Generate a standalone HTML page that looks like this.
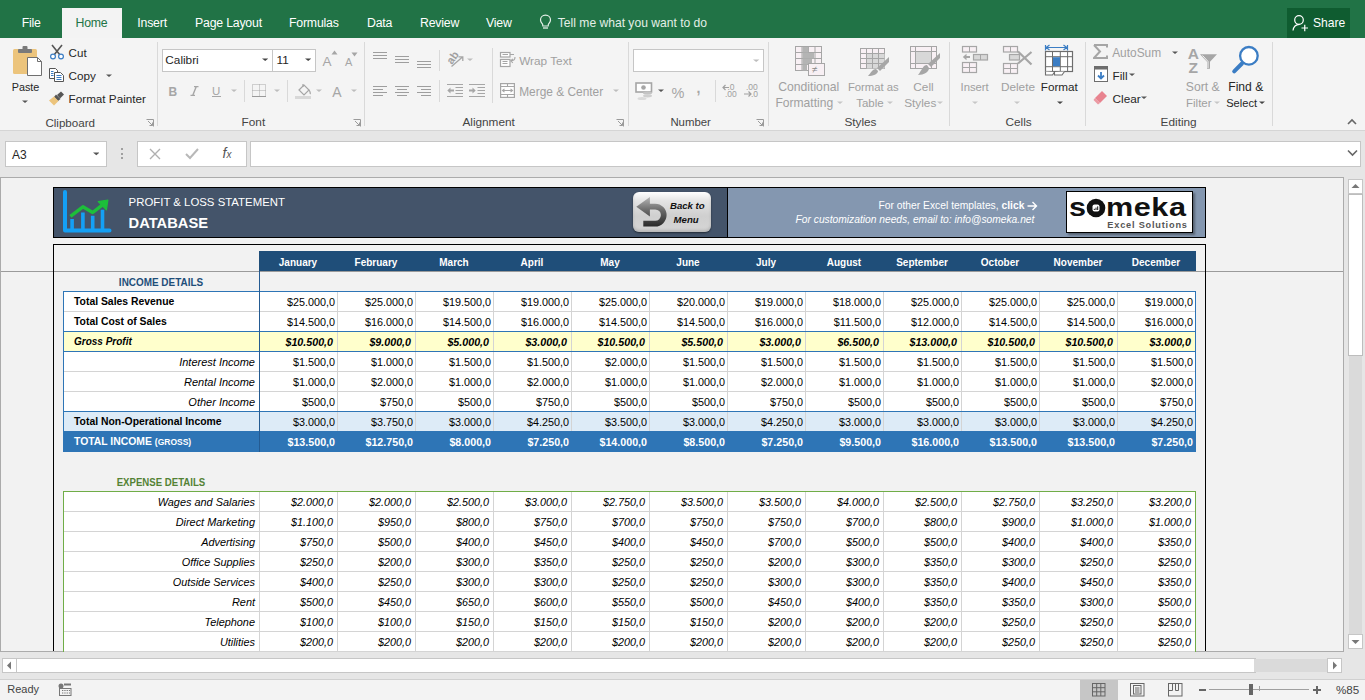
<!DOCTYPE html>
<html><head><meta charset="utf-8">
<style>
*{margin:0;padding:0;box-sizing:border-box}
html,body{width:1365px;height:700px;overflow:hidden;background:#f3f3f3;font-family:"Liberation Sans",sans-serif;position:relative}
.a{position:absolute}
.t{position:absolute;white-space:nowrap}
#sheet{left:0;top:177px;width:1344px;height:475px;background:#f2f2f2;overflow:hidden}
.c{position:absolute;height:20px;font-size:11px;line-height:20px;white-space:nowrap;color:#000}
</style></head><body>
<div class='a' style='left:0px;top:0px;width:1365px;height:38px;background:#217346'></div>
<div class='a' style='left:62px;top:8px;width:60px;height:30px;background:#f3f3f3'></div>
<div class='t' style='left:21.7px;top:16.99px;font-size:12.3px;line-height:12.3px;color:#ffffff;letter-spacing:-0.2px'>File</div>
<div class='t' style='left:75.5px;top:16.99px;font-size:12.3px;line-height:12.3px;color:#217346;letter-spacing:-0.2px'>Home</div>
<div class='t' style='left:137.3px;top:16.99px;font-size:12.3px;line-height:12.3px;color:#ffffff;letter-spacing:-0.2px'>Insert</div>
<div class='t' style='left:195px;top:16.99px;font-size:12.3px;line-height:12.3px;color:#ffffff;letter-spacing:-0.2px'>Page Layout</div>
<div class='t' style='left:289px;top:16.99px;font-size:12.3px;line-height:12.3px;color:#ffffff;letter-spacing:-0.2px'>Formulas</div>
<div class='t' style='left:367px;top:16.99px;font-size:12.3px;line-height:12.3px;color:#ffffff;letter-spacing:-0.2px'>Data</div>
<div class='t' style='left:420px;top:16.99px;font-size:12.3px;line-height:12.3px;color:#ffffff;letter-spacing:-0.2px'>Review</div>
<div class='t' style='left:486px;top:16.99px;font-size:12.3px;line-height:12.3px;color:#ffffff;letter-spacing:-0.2px'>View</div>
<svg class='a' style='left:539px;top:14px' width='13' height='16' viewBox='0 0 13 16'><path d='M6.5 1.2 C3.4 1.2 1.5 3.4 1.5 6 C1.5 8 2.8 9.2 3.6 10.3 L3.8 12 L9.2 12 L9.4 10.3 C10.2 9.2 11.5 8 11.5 6 C11.5 3.4 9.6 1.2 6.5 1.2Z' fill='none' stroke='#e6f0e9' stroke-width='1.2'/><path d='M4 14 L9 14' stroke='#e6f0e9' stroke-width='1.3'/></svg>
<div class='t' style='left:557.8px;top:16.56px;font-size:12.1px;line-height:12.1px;color:#e4efe7;'>Tell me what you want to do</div>
<div class='a' style='left:1287px;top:8px;width:63px;height:30px;background:#0f5c30'></div>
<svg class='a' style='left:1292px;top:14px' width='18' height='18' viewBox='0 0 18 18'><circle cx='7' cy='6' r='4.3' fill='none' stroke='#fff' stroke-width='1.2'/><path d='M1 16.5 C1.5 12.5 4 10.5 7.5 10.3' fill='none' stroke='#fff' stroke-width='1.2'/><path d='M9.5 14 L16 14 M12.75 10.8 L12.75 17.2' stroke='#fff' stroke-width='1.2'/></svg>
<div class='t' style='left:1313px;top:16.56px;font-size:12.1px;line-height:12.1px;color:#ffffff;'>Share</div>
<div class='a' style='left:0px;top:38px;width:1365px;height:92px;background:#f4f4f4'></div>
<div class='a' style='left:0px;top:130px;width:1365px;height:1px;background:#d5d5d5'></div>
<div class='a' style='left:157px;top:42px;width:1px;height:84px;background:#d9d9d9'></div>
<div class='a' style='left:364px;top:42px;width:1px;height:84px;background:#d9d9d9'></div>
<div class='a' style='left:628px;top:42px;width:1px;height:84px;background:#d9d9d9'></div>
<div class='a' style='left:768px;top:42px;width:1px;height:84px;background:#d9d9d9'></div>
<div class='a' style='left:949px;top:42px;width:1px;height:84px;background:#d9d9d9'></div>
<div class='a' style='left:1085px;top:42px;width:1px;height:84px;background:#d9d9d9'></div>
<div class='a' style='left:1272px;top:42px;width:1px;height:84px;background:#d9d9d9'></div>
<div class='t' style='left:45.4px;top:116.78px;font-size:11.6px;line-height:11.6px;color:#444444;'>Clipboard</div>
<div class='t' style='left:241.6px;top:116.61px;font-size:11.8px;line-height:11.8px;color:#444444;'>Font</div>
<div class='t' style='left:462.4px;top:116.61px;font-size:11.8px;line-height:11.8px;color:#444444;'>Alignment</div>
<div class='t' style='left:670.4px;top:116.95px;font-size:11.4px;line-height:11.4px;color:#444444;'>Number</div>
<div class='t' style='left:844.4px;top:116.61px;font-size:11.8px;line-height:11.8px;color:#444444;'>Styles</div>
<div class='t' style='left:1005.5px;top:116.61px;font-size:11.8px;line-height:11.8px;color:#444444;'>Cells</div>
<div class='t' style='left:1160.6px;top:116.61px;font-size:11.8px;line-height:11.8px;color:#444444;'>Editing</div>
<svg class='a' style='left:146px;top:118.5px' width='8' height='8' viewBox='0 0 8 8'><path d='M0.5 0.5 H7.5 V7.5' fill='none' stroke='#9a9a9a' stroke-width='1'/><path d='M2 2 L6.5 6.5 M6.5 3.5 V6.5 H3.5' fill='none' stroke='#9a9a9a' stroke-width='1'/></svg>
<svg class='a' style='left:353px;top:118.5px' width='8' height='8' viewBox='0 0 8 8'><path d='M0.5 0.5 H7.5 V7.5' fill='none' stroke='#9a9a9a' stroke-width='1'/><path d='M2 2 L6.5 6.5 M6.5 3.5 V6.5 H3.5' fill='none' stroke='#9a9a9a' stroke-width='1'/></svg>
<svg class='a' style='left:616px;top:118.5px' width='8' height='8' viewBox='0 0 8 8'><path d='M0.5 0.5 H7.5 V7.5' fill='none' stroke='#9a9a9a' stroke-width='1'/><path d='M2 2 L6.5 6.5 M6.5 3.5 V6.5 H3.5' fill='none' stroke='#9a9a9a' stroke-width='1'/></svg>
<svg class='a' style='left:756px;top:118.5px' width='8' height='8' viewBox='0 0 8 8'><path d='M0.5 0.5 H7.5 V7.5' fill='none' stroke='#9a9a9a' stroke-width='1'/><path d='M2 2 L6.5 6.5 M6.5 3.5 V6.5 H3.5' fill='none' stroke='#9a9a9a' stroke-width='1'/></svg>
<svg class='a' style='left:1347px;top:118px' width='10' height='7' viewBox='0 0 10 7'><path d='M1 6 L5 2 L9 6' fill='none' stroke='#666' stroke-width='1.6'/></svg>
<svg class='a' style='left:12px;top:45px' width='31' height='32' viewBox='0 0 31 32'><rect x='1' y='4' width='24' height='25' rx='1.5' fill='#ecc47c'/>
<rect x='6' y='4' width='14' height='4' rx='1' fill='#7a7a7a'/><rect x='10.5' y='1' width='5' height='4' rx='1' fill='#7a7a7a'/>
<path d='M15.5 12.5 H25.5 L29.5 16.5 V30.5 H15.5 Z' fill='#fff' stroke='#6f6f6f' stroke-width='1'/><path d='M25.5 12.5 V16.5 H29.5' fill='none' stroke='#6f6f6f' stroke-width='1'/></svg>
<div class='t' style='left:11.7px;top:82.46px;font-size:10.8px;line-height:10.8px;color:#262626;'>Paste</div>
<svg class='a' style='left:21.5px;top:99.5px' width='6' height='4' viewBox='0 0 6 4'><path d='M0 0.5 L6 0.5 L3 2.90Z' fill='#555'/></svg>
<svg class='a' style='left:49px;top:44px' width='16' height='16' viewBox='0 0 16 16'><path d='M3 1 L11 11 M13 1 L5 11' stroke='#555' stroke-width='1.6'/><circle cx='4' cy='12.5' r='2.4' fill='#fff' stroke='#3b7dc4' stroke-width='1.2'/><circle cx='12' cy='12.5' r='2.4' fill='#fff' stroke='#3b7dc4' stroke-width='1.2'/></svg>
<div class='t' style='left:68.6px;top:46.78px;font-size:11.6px;line-height:11.6px;color:#262626;'>Cut</div>
<svg class='a' style='left:48px;top:67px' width='17' height='16' viewBox='0 0 17 16'><path d='M1.5 1.5 H7.5 L9.5 3.5 V11.5 H1.5Z' fill='#fff' stroke='#555' stroke-width='1'/><path d='M6.5 5.5 H12.5 L15.5 8.5 V14.5 H6.5Z' fill='#fff' stroke='#555' stroke-width='1'/>
<path d='M3 4.5 H5.5 M3 6.5 H5.5 M3 8.5 H5.5' stroke='#3b7dc4' stroke-width='1'/><path d='M8.5 8.5 H13.5 M8.5 10.5 H13.5 M8.5 12.5 H13.5' stroke='#3b7dc4' stroke-width='1'/></svg>
<div class='t' style='left:68.6px;top:69.50px;font-size:11.7px;line-height:11.7px;color:#262626;'>Copy</div>
<svg class='a' style='left:105.5px;top:74px' width='6' height='4' viewBox='0 0 6 4'><path d='M0 0.5 L6 0.5 L3 2.90Z' fill='#555'/></svg>
<svg class='a' style='left:48px;top:90px' width='17' height='16' viewBox='0 0 17 16'><path d='M9 5 L13 1.5 L16 4.5 L12 8.5Z' fill='#555'/><path d='M8 4.5 L12.5 9 L10 11 L6 7Z' fill='#555'/><path d='M6 6.5 L10.5 11 L6 15.5 L1 10.5 Z' fill='#ecc47c'/></svg>
<div class='t' style='left:68.6px;top:92.60px;font-size:11.7px;line-height:11.7px;color:#262626;'>Format Painter</div>
<div class='a' style='left:162px;top:49px;width:111px;height:23px;background:#fff;border:1px solid #c6c6c6'></div>
<div class='a' style='left:272px;top:49px;width:44px;height:23px;background:#fff;border:1px solid #c6c6c6'></div>
<div class='t' style='left:165.3px;top:55.41px;font-size:11.8px;line-height:11.8px;color:#262626;'>Calibri</div>
<svg class='a' style='left:262.0px;top:58px' width='6.4' height='4' viewBox='0 0 6.4 4'><path d='M0 0.5 L6.4 0.5 L3.2 3.06Z' fill='#444'/></svg>
<div class='t' style='left:276.5px;top:55.41px;font-size:11.8px;line-height:11.8px;color:#262626;'>11</div>
<svg class='a' style='left:305.1px;top:58px' width='6.4' height='4' viewBox='0 0 6.4 4'><path d='M0 0.5 L6.4 0.5 L3.2 3.06Z' fill='#444'/></svg>
<div class='t' style='left:322.5px;top:55.07px;font-size:13.5px;line-height:13.5px;color:#a6a6a6;'>A</div>
<svg class='a' style='left:331px;top:50px' width='7' height='5' viewBox='0 0 7 5'><path d='M0.5 4.5 L3.5 0.5 L6.5 4.5Z' fill='#a6a6a6'/></svg>
<div class='t' style='left:345px;top:57.19px;font-size:11px;line-height:11px;color:#a6a6a6;'>A</div>
<svg class='a' style='left:351px;top:52px' width='7' height='5' viewBox='0 0 7 5'><path d='M0.5 0.5 L6.5 0.5 L3.5 4.5Z' fill='#a6a6a6'/></svg>
<div class='t' style='left:168.5px;top:85.84px;font-size:12px;line-height:12px;color:#a6a6a6;font-weight:bold'>B</div>
<svg class='a' style='left:190px;top:86px' width='9' height='10' viewBox='0 0 9 10'><path d='M4 0.5 H8.5 M0.5 9.5 H5 M6.3 0.5 L2.7 9.5' fill='none' stroke='#a6a6a6' stroke-width='1.4'/></svg>
<div class='t' style='left:212px;top:86.27px;font-size:11.5px;line-height:11.5px;color:#a6a6a6;'>U</div>
<div class='a' style='left:212px;top:96px;width:9px;height:1px;background:#a6a6a6'></div>
<svg class='a' style='left:230.5px;top:89px' width='6' height='4' viewBox='0 0 6 4'><path d='M0 0.5 L6 0.5 L3 2.90Z' fill='#bdbdbd'/></svg>
<div class='a' style='left:244px;top:80px;width:1px;height:22px;background:#d9d9d9'></div>
<svg class='a' style='left:252px;top:84px' width='14' height='13' viewBox='0 0 14 13'><path d='M0.5 0.5 H13.5 V12.5 H0.5Z M7.5 0.5 V12.5 M0.5 6.5 H13.5' fill='none' stroke='#a8a8a8' stroke-width='1' stroke-dasharray='1 1'/><path d='M0 12.5 H14' stroke='#9a9a9a' stroke-width='1'/></svg>
<svg class='a' style='left:273.5px;top:89px' width='6' height='4' viewBox='0 0 6 4'><path d='M0 0.5 L6 0.5 L3 2.90Z' fill='#bdbdbd'/></svg>
<div class='a' style='left:287px;top:80px;width:1px;height:22px;background:#d9d9d9'></div>
<svg class='a' style='left:295px;top:82px' width='17' height='17' viewBox='0 0 17 17'><path d='M4 8 L9 3 L14 8 L9 13Z' fill='none' stroke='#a6a6a6' stroke-width='1.2'/><path d='M8 2 L8 5' stroke='#a6a6a6' stroke-width='1.2'/><path d='M14 8 Q16 11 15 12' fill='none' stroke='#a6a6a6' stroke-width='1.2'/><rect x='0' y='14' width='16' height='3' fill='#d8d8d8'/></svg>
<svg class='a' style='left:316.3px;top:89px' width='6' height='4' viewBox='0 0 6 4'><path d='M0 0.5 L6 0.5 L3 2.90Z' fill='#bdbdbd'/></svg>
<div class='t' style='left:332.3px;top:84.65px;font-size:14px;line-height:14px;color:#a6a6a6;'>A</div>
<svg class='a' style='left:351px;top:89px' width='6' height='4' viewBox='0 0 6 4'><path d='M0 0.5 L6 0.5 L3 2.90Z' fill='#bdbdbd'/></svg>
<div class='a' style='left:373px;top:52px;width:14px;height:1px;background:#9e9e9e'></div>
<div class='a' style='left:373px;top:55px;width:14px;height:1px;background:#9e9e9e'></div>
<div class='a' style='left:373px;top:58px;width:14px;height:1px;background:#9e9e9e'></div>
<div class='a' style='left:395px;top:56px;width:14px;height:1px;background:#9e9e9e'></div>
<div class='a' style='left:395px;top:59px;width:14px;height:1px;background:#9e9e9e'></div>
<div class='a' style='left:395px;top:62px;width:14px;height:1px;background:#9e9e9e'></div>
<div class='a' style='left:417px;top:61px;width:14px;height:1px;background:#9e9e9e'></div>
<div class='a' style='left:417px;top:64px;width:14px;height:1px;background:#9e9e9e'></div>
<div class='a' style='left:417px;top:67px;width:14px;height:1px;background:#9e9e9e'></div>
<div class='a' style='left:439px;top:50px;width:1px;height:21px;background:#d9d9d9'></div>
<svg class='a' style='left:445px;top:50px' width='22' height='19' viewBox='0 0 22 19'><text x='0' y='0' font-size='11' font-family='Liberation Sans' fill='#a0a0a0' font-weight='bold' transform='translate(7 15) rotate(-55)'>ab</text><path d='M6.5 16.5 L17.5 7 M13.5 6.8 H17.8 V11' fill='none' stroke='#a6a6a6' stroke-width='1.3'/></svg>
<svg class='a' style='left:466.5px;top:58px' width='6' height='4' viewBox='0 0 6 4'><path d='M0 0.5 L6 0.5 L3 2.90Z' fill='#bdbdbd'/></svg>
<div class='a' style='left:373px;top:86px;width:14px;height:1px;background:#9e9e9e'></div>
<div class='a' style='left:373px;top:89px;width:10px;height:1px;background:#9e9e9e'></div>
<div class='a' style='left:373px;top:92px;width:14px;height:1px;background:#9e9e9e'></div>
<div class='a' style='left:373px;top:95px;width:10px;height:1px;background:#9e9e9e'></div>
<div class='a' style='left:395.0px;top:86px;width:14px;height:1px;background:#9e9e9e'></div>
<div class='a' style='left:397.0px;top:89px;width:10px;height:1px;background:#9e9e9e'></div>
<div class='a' style='left:395.0px;top:92px;width:14px;height:1px;background:#9e9e9e'></div>
<div class='a' style='left:397.0px;top:95px;width:10px;height:1px;background:#9e9e9e'></div>
<div class='a' style='left:417px;top:86px;width:14px;height:1px;background:#9e9e9e'></div>
<div class='a' style='left:421px;top:89px;width:10px;height:1px;background:#9e9e9e'></div>
<div class='a' style='left:417px;top:92px;width:14px;height:1px;background:#9e9e9e'></div>
<div class='a' style='left:421px;top:95px;width:10px;height:1px;background:#9e9e9e'></div>
<div class='a' style='left:439px;top:80px;width:1px;height:22px;background:#d9d9d9'></div>
<svg class='a' style='left:446px;top:83px' width='18' height='15' viewBox='0 0 18 15'><path d='M1 1.5 H17 M9.5 4.5 H17 M9.5 7.5 H17 M9.5 10.5 H17 M1 13.5 H17' stroke='#a6a6a6' stroke-width='1.2'/><path d='M1.3 7.5 L4.5 4.5 V10.5Z' fill='#a6a6a6'/><path d='M3 7.5 H8' stroke='#a6a6a6' stroke-width='2'/></svg>
<svg class='a' style='left:469px;top:83px' width='18' height='15' viewBox='0 0 18 15'><path d='M0 1.5 H16 M8.5 4.5 H16 M8.5 7.5 H16 M8.5 10.5 H16 M0 13.5 H16' stroke='#a6a6a6' stroke-width='1.2'/><path d='M6.7 7.5 L3.5 4.5 V10.5Z' fill='#a6a6a6'/><path d='M0 7.5 H5' stroke='#a6a6a6' stroke-width='2'/></svg>
<div class='a' style='left:492px;top:48px;width:1px;height:55px;background:#d9d9d9'></div>
<svg class='a' style='left:499px;top:51px' width='18' height='17' viewBox='0 0 18 17'><rect x='1.5' y='1.5' width='9.5' height='4.5' fill='#fff' stroke='#a6a6a6' stroke-width='1.2'/><path d='M3.5 3.5 H9 M11 3.5 H15' stroke='#a6a6a6' stroke-width='1'/><rect x='1.5' y='8.5' width='9.5' height='7' fill='#fff' stroke='#a6a6a6' stroke-width='1.2'/><path d='M3.5 10.5 H8.5 M3.5 12.5 H8.5' stroke='#a6a6a6' stroke-width='1'/><path d='M16 6 C16 8.5 15 9.8 12 9.8 M13.8 7.8 L11.8 9.8 L13.8 11.8' fill='none' stroke='#a6a6a6' stroke-width='1.1'/></svg>
<div class='t' style='left:519.2px;top:55.81px;font-size:11.8px;line-height:11.8px;color:#a0a0a0;'>Wrap Text</div>
<svg class='a' style='left:500px;top:83px' width='15' height='15' viewBox='0 0 15 15'><rect x='0.6' y='0.6' width='13.8' height='13.8' fill='#fff' stroke='#a6a6a6' stroke-width='1.2'/><path d='M0.5 3.5 H14.5 M0.5 11.5 H14.5 M7.5 0.5 V3.5 M7.5 11.5 V14.5' stroke='#a6a6a6' stroke-width='1.1'/><path d='M2.5 7.5 H12.5 M4.5 5.8 L2.5 7.5 L4.5 9.2 M10.5 5.8 L12.5 7.5 L10.5 9.2' fill='none' stroke='#a6a6a6' stroke-width='1.1'/></svg>
<div class='t' style='left:519.2px;top:86.63px;font-size:11.9px;line-height:11.9px;color:#a0a0a0;'>Merge &amp; Center</div>
<svg class='a' style='left:613px;top:89px' width='6' height='4' viewBox='0 0 6 4'><path d='M0 0.5 L6 0.5 L3 2.90Z' fill='#bdbdbd'/></svg>
<div class='a' style='left:633px;top:49px;width:131px;height:23px;background:#fff;border:1px solid #c6c6c6'></div>
<svg class='a' style='left:753.3px;top:58.5px' width='6.4' height='4' viewBox='0 0 6.4 4'><path d='M0 0.5 L6.4 0.5 L3.2 3.06Z' fill='#bdbdbd'/></svg>
<svg class='a' style='left:635px;top:82px' width='18' height='19' viewBox='0 0 18 19'><rect x='1' y='1' width='15.5' height='9' fill='#fff' stroke='#a6a6a6' stroke-width='1.6'/><circle cx='8.5' cy='5.5' r='2.3' fill='#a6a6a6'/><ellipse cx='12.5' cy='11' rx='4.5' ry='1.6' fill='#c4c4c4'/><ellipse cx='12.5' cy='13.8' rx='4.5' ry='1.6' fill='#cfcfcf'/><ellipse cx='7' cy='16.5' rx='4.5' ry='1.6' fill='#dadada'/></svg>
<svg class='a' style='left:657.5px;top:89px' width='6' height='4' viewBox='0 0 6 4'><path d='M0 0.5 L6 0.5 L3 2.90Z' fill='#555'/></svg>
<div class='t' style='left:671.5px;top:86.03px;font-size:14.5px;line-height:14.5px;color:#a6a6a6;'>%</div>
<div class='t' style='left:696.5px;top:81.45px;font-size:14px;line-height:14px;color:#a6a6a6;font-weight:bold'>,</div>
<div class='a' style='left:715px;top:80px;width:1px;height:22px;background:#d9d9d9'></div>
<svg class='a' style='left:722px;top:83px' width='17' height='16' viewBox='0 0 17 16'><text x='5.5' y='6.5' font-size='8.5' font-family='Liberation Sans' fill='#a0a0a0'>.0</text><text x='3' y='13.5' font-size='8.5' font-family='Liberation Sans' fill='#a0a0a0'>.00</text><path d='M1 4.5 H7 M3.5 2 L1 4.5 L3.5 7' fill='none' stroke='#a0a0a0' stroke-width='1.2'/></svg>
<svg class='a' style='left:743px;top:83px' width='17' height='16' viewBox='0 0 17 16'><text x='3' y='6.5' font-size='8.5' font-family='Liberation Sans' fill='#a0a0a0'>.00</text><text x='8' y='13.5' font-size='8.5' font-family='Liberation Sans' fill='#a0a0a0'>.0</text><path d='M1 11 H8 M5.5 8.5 L8 11 L5.5 13.5' fill='none' stroke='#a0a0a0' stroke-width='1.2'/></svg>
<svg class='a' style='left:794px;top:45px' width='32' height='32' viewBox='0 0 32 32'><g stroke='#a6a6a6' fill='#f8f0f4'><rect x='1.5' y='1.5' width='26' height='24'/></g>
<path d='M8 1.5 V25.5 M14.5 1.5 V25.5 M21 1.5 V25.5 M1.5 7.5 H27.5 M1.5 13.5 H27.5 M1.5 19.5 H27.5' stroke='#a6a6a6'/>
<rect x='8.5' y='2' width='6' height='5.5' fill='#b4b4b4'/><rect x='8.5' y='8' width='11.5' height='5.5' fill='#b4b4b4'/><rect x='8.5' y='14' width='9.5' height='5.5' fill='#b4b4b4'/><rect x='8.5' y='20' width='4.5' height='5.5' fill='#b4b4b4'/>
<rect x='14.5' y='18.5' width='16' height='12' fill='#f8f0f4' stroke='#a6a6a6'/><text x='18' y='28' font-size='10' fill='#888' font-family='Liberation Sans'>≠</text></svg>
<div class='t' style='left:778.2px;top:81.37px;font-size:12.2px;line-height:12.2px;color:#a0a0a0;'>Conditional</div>
<div class='t' style='left:775.4px;top:97.46px;font-size:12.1px;line-height:12.1px;color:#a0a0a0;'>Formatting</div>
<svg class='a' style='left:836.5px;top:100.5px' width='6' height='4' viewBox='0 0 6 4'><path d='M0 0.5 L6 0.5 L3 2.90Z' fill='#c6c6c6'/></svg>
<svg class='a' style='left:859px;top:47px' width='32' height='30' viewBox='0 0 32 30'><rect x='1.5' y='1.5' width='24' height='20' fill='#f8f0f4' stroke='#a6a6a6'/>
<rect x='7.5' y='6.5' width='18' height='15' fill='#d8d8d8'/>
<path d='M7.5 1.5 V21.5 M13.5 1.5 V21.5 M19.5 1.5 V21.5 M1.5 6.5 H25.5 M1.5 11.5 H25.5 M1.5 16.5 H25.5' stroke='#a6a6a6'/>
<path d='M30 10 L30 15 L21 24 L18 21 Z' fill='#a6a6a6'/><path d='M17 22 C13 22 12 26 9 29 C14 29 19 27 19 24Z' fill='#a6a6a6'/></svg>
<div class='t' style='left:847.9px;top:82.13px;font-size:11.3px;line-height:11.3px;color:#a0a0a0;'>Format as</div>
<div class='t' style='left:856.2px;top:97.97px;font-size:11.5px;line-height:11.5px;color:#a0a0a0;'>Table</div>
<svg class='a' style='left:886.6px;top:100.5px' width='6' height='4' viewBox='0 0 6 4'><path d='M0 0.5 L6 0.5 L3 2.90Z' fill='#c6c6c6'/></svg>
<svg class='a' style='left:909px;top:45px' width='32' height='32' viewBox='0 0 32 32'><rect x='1.5' y='1.5' width='26' height='22' fill='#f8f0f4' stroke='#a6a6a6'/>
<rect x='6.5' y='6.5' width='16' height='12' fill='#d8d8d8' stroke='#a6a6a6'/><path d='M1.5 6.5 H27.5 M1.5 18.5 H27.5 M6.5 1.5 V23.5 M22.5 1.5 V23.5' stroke='#a6a6a6'/>
<path d='M31 8 L31 13 L22 22 L19 19 Z' fill='#a6a6a6'/><path d='M18 20 C14 20 13 25 9 30 C15 30 20 27 20 23Z' fill='#a6a6a6'/></svg>
<div class='t' style='left:913.3px;top:81.71px;font-size:11.8px;line-height:11.8px;color:#a0a0a0;'>Cell</div>
<div class='t' style='left:904.2px;top:97.71px;font-size:11.8px;line-height:11.8px;color:#a0a0a0;'>Styles</div>
<svg class='a' style='left:936.5px;top:100.5px' width='6' height='4' viewBox='0 0 6 4'><path d='M0 0.5 L6 0.5 L3 2.90Z' fill='#c6c6c6'/></svg>
<svg class='a' style='left:961px;top:45px' width='28' height='29' viewBox='0 0 28 29'><rect x='1.5' y='1.5' width='14' height='5.5' fill='#f8f0f4' stroke='#a6a6a6' stroke-width='1.2'/><path d='M8.5 1.5 V7' stroke='#a6a6a6'/>
<rect x='12.5' y='9.5' width='14' height='5.5' fill='#d8d8d8' stroke='#a6a6a6' stroke-width='1.2'/><path d='M19.5 9.5 V15' stroke='#a6a6a6'/>
<path d='M3 12 H9' stroke='#a6a6a6' stroke-width='2'/><path d='M1.8 12 L5.5 8.8 V15.2Z' fill='#a6a6a6'/>
<rect x='1.5' y='17.5' width='14' height='10' fill='#f8f0f4' stroke='#a6a6a6' stroke-width='1.2'/><path d='M8.5 17.5 V27.5 M1.5 22.5 H15.5' stroke='#a6a6a6'/></svg>
<div class='t' style='left:960.5px;top:81.83px;font-size:11.3px;line-height:11.3px;color:#a0a0a0;'>Insert</div>
<svg class='a' style='left:971.5px;top:100.5px' width='6' height='4' viewBox='0 0 6 4'><path d='M0 0.5 L6 0.5 L3 2.90Z' fill='#c6c6c6'/></svg>
<svg class='a' style='left:1002px;top:45px' width='31' height='30' viewBox='0 0 31 30'><rect x='1.5' y='1.5' width='14' height='5.5' fill='#f8f0f4' stroke='#a6a6a6' stroke-width='1.2'/><path d='M8.5 1.5 V7' stroke='#a6a6a6'/>
<rect x='7.5' y='9.5' width='10' height='5.5' fill='#d8d8d8' stroke='#a6a6a6' stroke-width='1.2'/>
<rect x='1.5' y='18.5' width='14' height='10' fill='#f8f0f4' stroke='#a6a6a6' stroke-width='1.2'/><path d='M8.5 18.5 V28.5 M1.5 23.5 H15.5' stroke='#a6a6a6'/>
<path d='M16 6.5 L29.5 19.5 M29.5 7 L16 18.5' stroke='#a6a6a6' stroke-width='2.2'/></svg>
<div class='t' style='left:1000.9px;top:82.41px;font-size:11.8px;line-height:11.8px;color:#a0a0a0;'>Delete</div>
<svg class='a' style='left:1013.5px;top:100.5px' width='6' height='4' viewBox='0 0 6 4'><path d='M0 0.5 L6 0.5 L3 2.90Z' fill='#c6c6c6'/></svg>
<svg class='a' style='left:1044px;top:44px' width='30' height='33' viewBox='0 0 30 33'><path d='M1.5 1 V6.5 M23.5 1 V6.5 M2 3.5 H23 M5.5 1 L2.2 3.5 L5.5 6 M19.5 1 L22.8 3.5 L19.5 6' fill='none' stroke='#3b7dc4' stroke-width='1.2'/>
<rect x='1.5' y='7.5' width='27' height='20' fill='#fff' stroke='#6d6d6d' stroke-width='1.2'/>
<path d='M8.5 7.5 V27.5 M16.3 7.5 V27.5 M23.6 7.5 V27.5 M1.5 12.7 H28.5 M1.5 22.7 H28.5' stroke='#6d6d6d'/>
<rect x='9' y='13.2' width='7' height='9' fill='#3b7dc4'/>
<path d='M1.5 27.5 V31 H8.5 L10.5 28 M10.5 28 V31 H18 L20.5 27.5' fill='#fff' stroke='#6d6d6d' stroke-width='1.1'/></svg>
<div class='t' style='left:1040.8px;top:80.50px;font-size:11.7px;line-height:11.7px;color:#262626;'>Format</div>
<svg class='a' style='left:1056.5px;top:100.5px' width='6' height='4' viewBox='0 0 6 4'><path d='M0 0.5 L6 0.5 L3 2.90Z' fill='#444'/></svg>
<svg class='a' style='left:1093px;top:44px' width='16' height='15' viewBox='0 0 16 15'><path d='M1 1 H14 V3.5 M1 1 L7 7.5 L1 14 H14 V11.5' fill='none' stroke='#a6a6a6' stroke-width='2'/></svg>
<div class='t' style='left:1112.2px;top:47.73px;font-size:11.9px;line-height:11.9px;color:#a0a0a0;'>AutoSum</div>
<svg class='a' style='left:1171.5px;top:50.5px' width='6' height='4' viewBox='0 0 6 4'><path d='M0 0.5 L6 0.5 L3 2.90Z' fill='#555'/></svg>
<svg class='a' style='left:1094px;top:66px' width='15' height='17' viewBox='0 0 15 17'><rect x='0.5' y='0.5' width='13' height='15' fill='#fff' stroke='#6d6d6d'/><rect x='0.5' y='0.5' width='13' height='3' fill='#6d6d6d'/><path d='M7 6 V12 M4 9.5 L7 12.5 L10 9.5' fill='none' stroke='#3b7dc4' stroke-width='1.8'/></svg>
<div class='t' style='left:1112.5px;top:70.61px;font-size:11.8px;line-height:11.8px;color:#262626;'>Fill</div>
<svg class='a' style='left:1129px;top:73px' width='6' height='4' viewBox='0 0 6 4'><path d='M0 0.5 L6 0.5 L3 2.90Z' fill='#555'/></svg>
<svg class='a' style='left:1093px;top:90px' width='15' height='15' viewBox='0 0 15 15'><path d='M9 1 L14 6 L7 13 L2 8Z' fill='#e8838f'/><path d='M2 8 L7 13 L5 14.5 L0.5 10Z' fill='#e8838f' opacity='0.8'/></svg>
<div class='t' style='left:1112.5px;top:93.61px;font-size:11.8px;line-height:11.8px;color:#262626;'>Clear</div>
<svg class='a' style='left:1141px;top:96px' width='6' height='4' viewBox='0 0 6 4'><path d='M0 0.5 L6 0.5 L3 2.90Z' fill='#555'/></svg>
<svg class='a' style='left:1187px;top:45px' width='32' height='30' viewBox='0 0 32 30'><text x='0.8' y='13.5' font-size='15.5' font-weight='bold' fill='#a6a6a6' font-family='Liberation Sans'>A</text><text x='1.5' y='27.6' font-size='15.5' font-weight='bold' fill='#a6a6a6' font-family='Liberation Sans'>Z</text>
<path d='M13 9.2 H30 L23 16.8 V23.7 H20 V16.8Z' fill='#a6a6a6'/><path d='M15.5 10.5 L21 16.5 V23' fill='none' stroke='#fff' stroke-width='0.9'/></svg>
<div class='t' style='left:1185.8px;top:81.17px;font-size:12.2px;line-height:12.2px;color:#a0a0a0;'>Sort &amp;</div>
<div class='t' style='left:1186px;top:97.97px;font-size:11.5px;line-height:11.5px;color:#a0a0a0;'>Filter</div>
<svg class='a' style='left:1214px;top:100.5px' width='6' height='4' viewBox='0 0 6 4'><path d='M0 0.5 L6 0.5 L3 2.90Z' fill='#c6c6c6'/></svg>
<svg class='a' style='left:1231px;top:45px' width='30' height='30' viewBox='0 0 30 30'><circle cx='17.9' cy='10.8' r='8.8' fill='#fff' stroke='#3b7dc4' stroke-width='2.3'/><path d='M11 18.5 L3.2 26.3' stroke='#3b7dc4' stroke-width='4' stroke-linecap='round'/></svg>
<div class='t' style='left:1228.3px;top:81.26px;font-size:12.1px;line-height:12.1px;color:#262626;'>Find &amp;</div>
<div class='t' style='left:1226.2px;top:98.30px;font-size:11.1px;line-height:11.1px;color:#262626;'>Select</div>
<svg class='a' style='left:1259.4px;top:100.5px' width='6' height='4' viewBox='0 0 6 4'><path d='M0 0.5 L6 0.5 L3 2.90Z' fill='#444'/></svg>
<div class='a' style='left:0px;top:131px;width:1365px;height:46px;background:#e6e6e6'></div>
<div class='a' style='left:5px;top:141px;width:102px;height:26px;background:#fff;border:1px solid #c6c6c6'></div>
<div class='t' style='left:12px;top:149.14px;font-size:12px;line-height:12px;color:#262626;'>A3</div>
<svg class='a' style='left:92.7px;top:151.5px' width='6.6' height='4' viewBox='0 0 6.6 4'><path d='M0 0.5 L6.6 0.5 L3.3 3.14Z' fill='#555'/></svg>
<div class='a' style='left:121px;top:148px;width:2px;height:2px;background:#a0a0a0'></div>
<div class='a' style='left:121px;top:152.5px;width:2px;height:2px;background:#a0a0a0'></div>
<div class='a' style='left:121px;top:157px;width:2px;height:2px;background:#a0a0a0'></div>
<div class='a' style='left:137px;top:141px;width:110px;height:26px;background:#fff;border:1px solid #c6c6c6'></div>
<svg class='a' style='left:148px;top:147px' width='14' height='14' viewBox='0 0 14 14'><path d='M2 2 L12 12 M12 2 L2 12' stroke='#b0b0b0' stroke-width='1.4'/></svg>
<svg class='a' style='left:184px;top:147px' width='16' height='14' viewBox='0 0 16 14'><path d='M2 7 L6 11 L14 2' fill='none' stroke='#b8b8b8' stroke-width='2'/></svg>
<div class='t' style='left:222.5px;top:146.45px;font-size:14px;line-height:14px;color:#555;font-family:'Liberation Serif',serif;font-weight:bold'><i>f</i><span style='font-size:10px'><i>x</i></span></div>
<div class='a' style='left:250px;top:141px;width:1111px;height:26px;background:#fff;border:1px solid #c6c6c6'></div>
<svg class='a' style='left:1347px;top:149px' width='11' height='8' viewBox='0 0 11 8'><path d='M1 1.5 L5.5 6 L10 1.5' fill='none' stroke='#666' stroke-width='1.6'/></svg>
<div class='a' style='left:1344px;top:177px;width:21px;height:475px;background:#e6e6e6'></div>
<div class='a' style='left:1348px;top:179px;width:15px;height:15px;background:#fff;border:1px solid #c6c6c6'></div>
<svg class='a' style='left:1351px;top:183px' width='9' height='6' viewBox='0 0 9 6'><path d='M0.5 5 L4.5 1 L8.5 5Z' fill='#777'/></svg>
<div class='a' style='left:1349px;top:194px;width:13px;height:440px;background:#dadada'></div>
<div class='a' style='left:1348px;top:194px;width:15px;height:162px;background:#fff;border:1px solid #bdbdbd'></div>
<div class='a' style='left:1348px;top:634px;width:15px;height:15px;background:#fff;border:1px solid #c6c6c6'></div>
<svg class='a' style='left:1351px;top:639px' width='9' height='6' viewBox='0 0 9 6'><path d='M0.5 1 L4.5 5 L8.5 1Z' fill='#777'/></svg>
<div class='a' style='left:0px;top:652px;width:1365px;height:28px;background:#e6e6e6'></div>
<div class='a' style='left:2px;top:658px;width:1254px;height:15px;background:#fff;border:1px solid #c6c6c6'></div>
<div class='a' style='left:1254px;top:659px;width:73px;height:13px;background:#dadada'></div>
<div class='a' style='left:2px;top:658px;width:15px;height:15px;background:#fff;border:1px solid #c6c6c6'></div>
<svg class='a' style='left:6px;top:661px' width='6' height='9' viewBox='0 0 6 9'><path d='M5 0.5 L1 4.5 L5 8.5Z' fill='#777'/></svg>
<div class='a' style='left:1327px;top:658px;width:15px;height:15px;background:#fff;border:1px solid #c6c6c6'></div>
<svg class='a' style='left:1332px;top:661px' width='6' height='9' viewBox='0 0 6 9'><path d='M1 0.5 L5 4.5 L1 8.5Z' fill='#777'/></svg>
<div class='a' style='left:0px;top:679px;width:1365px;height:1px;background:#d0d0d0'></div>
<div class='a' style='left:0px;top:680px;width:1365px;height:20px;background:#f3f3f3'></div>
<div class='t' style='left:7.3px;top:684.49px;font-size:11px;line-height:11px;color:#444;'>Ready</div>
<svg class='a' style='left:58px;top:683px' width='14' height='13' viewBox='0 0 14 13'><circle cx='3' cy='3' r='2.5' fill='#777'/><path d='M6 1.5 H13' stroke='#777' stroke-width='2'/><rect x='1.5' y='5.5' width='11.5' height='7' fill='none' stroke='#777'/><path d='M4 7.5 H12 M4 10 H12' stroke='#777' stroke-dasharray='1.3 1'/></svg>
<div class='a' style='left:1080px;top:680px;width:38px;height:20px;background:#c6c6c6'></div>
<svg class='a' style='left:1092px;top:683px' width='14' height='14' viewBox='0 0 14 14'><rect x='0.5' y='0.5' width='12.5' height='12.5' fill='none' stroke='#666' stroke-width='1'/><path d='M4.7 0.5 V13 M8.8 0.5 V13 M0.5 4.7 H13 M0.5 8.8 H13' stroke='#666' stroke-width='1'/></svg>
<svg class='a' style='left:1130px;top:683px' width='15' height='14' viewBox='0 0 15 14'><rect x='0.5' y='0.5' width='13.5' height='12.5' fill='none' stroke='#666'/><rect x='3.5' y='2.5' width='7.5' height='8.5' fill='none' stroke='#666'/><path d='M5 5 H9.5 M5 7 H9.5 M5 9 H9.5' stroke='#666'/></svg>
<svg class='a' style='left:1168px;top:683px' width='15' height='14' viewBox='0 0 15 14'><rect x='0.5' y='0.5' width='13.5' height='12.5' fill='none' stroke='#666'/><path d='M4.5 0.5 V7.5 M7.5 0.5 V7.5 H10.5 V0.5 M0.5 7.5 H4.5' fill='none' stroke='#666'/></svg>
<div class='a' style='left:1199px;top:689px;width:7px;height:2px;background:#666'></div>
<div class='a' style='left:1209px;top:689px;width:100px;height:1px;background:#a0a0a0'></div>
<div class='a' style='left:1249px;top:684px;width:4px;height:11px;background:#666'></div>
<div class='a' style='left:1259px;top:686px;width:1px;height:5px;background:#a0a0a0'></div>
<div class='a' style='left:1313px;top:689px;width:8px;height:2px;background:#666'></div>
<div class='a' style='left:1316px;top:686px;width:2px;height:8px;background:#666'></div>
<div class='t' style='left:1336px;top:684.48px;font-size:11.6px;line-height:11.6px;color:#444;'>%85</div>
<div id="sheet" class="a">
<div class='a' style='left:0px;top:94px;width:1343px;height:1px;background:#9b9b9b'></div>
<div class='a' style='left:53px;top:67px;width:1153px;height:1px;background:#000'></div>
<div class='a' style='left:53px;top:67px;width:1px;height:420px;background:#000'></div>
<div class='a' style='left:1205px;top:67px;width:1px;height:420px;background:#000'></div>
<div class='a' style='left:53px;top:10px;width:1153px;height:51px;background:#000'></div>
<div class='a' style='left:54px;top:11px;width:673px;height:49px;background:#44546a'></div>
<div class='a' style='left:728px;top:11px;width:477px;height:49px;background:#8497b0'></div>
<div class='a' style='left:0px;top:0px;width:1344px;height:1px;background:#ababab'></div>
<div class='a' style='left:1343px;top:0px;width:1px;height:475px;background:#ababab'></div>
<div class='a' style='left:0px;top:474px;width:1344px;height:1px;background:#ababab'></div>
<div class='a' style='left:0px;top:0px;width:1px;height:475px;background:#ababab'></div>
<div class='a' style='left:259px;top:74px;width:937px;height:20px;background:#1f4e79'></div>
<div class='c' style='left:259px;top:76px;width:78px;height:20px;line-height:20px;text-align:center;color:#fff;font-weight:bold;font-size:10px'>January</div>
<div class='c' style='left:337px;top:76px;width:78px;height:20px;line-height:20px;text-align:center;color:#fff;font-weight:bold;font-size:10px'>February</div>
<div class='c' style='left:415px;top:76px;width:78px;height:20px;line-height:20px;text-align:center;color:#fff;font-weight:bold;font-size:10px'>March</div>
<div class='c' style='left:493px;top:76px;width:78px;height:20px;line-height:20px;text-align:center;color:#fff;font-weight:bold;font-size:10px'>April</div>
<div class='c' style='left:571px;top:76px;width:78px;height:20px;line-height:20px;text-align:center;color:#fff;font-weight:bold;font-size:10px'>May</div>
<div class='c' style='left:649px;top:76px;width:78px;height:20px;line-height:20px;text-align:center;color:#fff;font-weight:bold;font-size:10px'>June</div>
<div class='c' style='left:727px;top:76px;width:78px;height:20px;line-height:20px;text-align:center;color:#fff;font-weight:bold;font-size:10px'>July</div>
<div class='c' style='left:805px;top:76px;width:78px;height:20px;line-height:20px;text-align:center;color:#fff;font-weight:bold;font-size:10px'>August</div>
<div class='c' style='left:883px;top:76px;width:78px;height:20px;line-height:20px;text-align:center;color:#fff;font-weight:bold;font-size:10px'>September</div>
<div class='c' style='left:961px;top:76px;width:78px;height:20px;line-height:20px;text-align:center;color:#fff;font-weight:bold;font-size:10px'>October</div>
<div class='c' style='left:1039px;top:76px;width:78px;height:20px;line-height:20px;text-align:center;color:#fff;font-weight:bold;font-size:10px'>November</div>
<div class='c' style='left:1117px;top:76px;width:78px;height:20px;line-height:20px;text-align:center;color:#fff;font-weight:bold;font-size:10px'>December</div>
<div class='c' style='left:63px;top:95px;width:196px;height:20px;line-height:20px;text-align:center;color:#1f4e79;font-weight:bold;font-size:10.8px;transform:scaleX(0.92)'>INCOME DETAILS</div>
<div class='a' style='left:63px;top:115px;width:1132px;height:20px;background:#fff'></div>
<div class='a' style='left:63px;top:135px;width:1132px;height:20px;background:#fff'></div>
<div class='a' style='left:63px;top:155px;width:1132px;height:20px;background:#ffffcc'></div>
<div class='a' style='left:63px;top:175px;width:1132px;height:20px;background:#fff'></div>
<div class='a' style='left:63px;top:195px;width:1132px;height:20px;background:#fff'></div>
<div class='a' style='left:63px;top:215px;width:1132px;height:20px;background:#fff'></div>
<div class='a' style='left:63px;top:235px;width:1132px;height:20px;background:#ddebf7'></div>
<div class='a' style='left:63px;top:255px;width:1132px;height:20px;background:#2e75b6'></div>
<div class='a' style='left:337px;top:115px;width:1px;height:140px;background:#d4d4d4'></div>
<div class='a' style='left:415px;top:115px;width:1px;height:140px;background:#d4d4d4'></div>
<div class='a' style='left:493px;top:115px;width:1px;height:140px;background:#d4d4d4'></div>
<div class='a' style='left:571px;top:115px;width:1px;height:140px;background:#d4d4d4'></div>
<div class='a' style='left:649px;top:115px;width:1px;height:140px;background:#d4d4d4'></div>
<div class='a' style='left:727px;top:115px;width:1px;height:140px;background:#d4d4d4'></div>
<div class='a' style='left:805px;top:115px;width:1px;height:140px;background:#d4d4d4'></div>
<div class='a' style='left:883px;top:115px;width:1px;height:140px;background:#d4d4d4'></div>
<div class='a' style='left:961px;top:115px;width:1px;height:140px;background:#d4d4d4'></div>
<div class='a' style='left:1039px;top:115px;width:1px;height:140px;background:#d4d4d4'></div>
<div class='a' style='left:1117px;top:115px;width:1px;height:140px;background:#d4d4d4'></div>
<div class='a' style='left:63px;top:134px;width:1132px;height:1px;background:#d4d4d4'></div>
<div class='a' style='left:63px;top:154px;width:1132px;height:1px;background:#d4d4d4'></div>
<div class='a' style='left:63px;top:174px;width:1132px;height:1px;background:#d4d4d4'></div>
<div class='a' style='left:63px;top:194px;width:1132px;height:1px;background:#d4d4d4'></div>
<div class='a' style='left:63px;top:214px;width:1132px;height:1px;background:#d4d4d4'></div>
<div class='a' style='left:63px;top:234px;width:1132px;height:1px;background:#d4d4d4'></div>
<div class='a' style='left:63px;top:254px;width:1132px;height:1px;background:#d4d4d4'></div>
<div class='a' style='left:63px;top:114px;width:1133px;height:1px;background:#2e75b6'></div>
<div class='a' style='left:63px;top:154px;width:1133px;height:1px;background:#2e75b6'></div>
<div class='a' style='left:63px;top:174px;width:1133px;height:1px;background:#2e75b6'></div>
<div class='a' style='left:63px;top:234px;width:1133px;height:1px;background:#2e75b6'></div>
<div class='a' style='left:63px;top:254px;width:1133px;height:1px;background:#2e75b6'></div>
<div class='a' style='left:63px;top:274px;width:1133px;height:1px;background:#2e75b6'></div>
<div class='a' style='left:63px;top:114px;width:1px;height:161px;background:#2e75b6'></div>
<div class='a' style='left:1195px;top:114px;width:1px;height:161px;background:#2e75b6'></div>
<div class='a' style='left:259px;top:94px;width:1px;height:181px;background:#245b92'></div>
<div class='c' style='left:63px;top:115px;width:196px;height:20px;line-height:20px;font-weight:bold;font-size:10.4px;padding-left:11px'>Total Sales Revenue</div>
<div class='c' style='left:259px;top:115px;width:76px;height:20px;line-height:20px;text-align:right;font-size:10.8px;'>$25.000,0</div>
<div class='c' style='left:337px;top:115px;width:76px;height:20px;line-height:20px;text-align:right;font-size:10.8px;'>$25.000,0</div>
<div class='c' style='left:415px;top:115px;width:76px;height:20px;line-height:20px;text-align:right;font-size:10.8px;'>$19.500,0</div>
<div class='c' style='left:493px;top:115px;width:76px;height:20px;line-height:20px;text-align:right;font-size:10.8px;'>$19.000,0</div>
<div class='c' style='left:571px;top:115px;width:76px;height:20px;line-height:20px;text-align:right;font-size:10.8px;'>$25.000,0</div>
<div class='c' style='left:649px;top:115px;width:76px;height:20px;line-height:20px;text-align:right;font-size:10.8px;'>$20.000,0</div>
<div class='c' style='left:727px;top:115px;width:76px;height:20px;line-height:20px;text-align:right;font-size:10.8px;'>$19.000,0</div>
<div class='c' style='left:805px;top:115px;width:76px;height:20px;line-height:20px;text-align:right;font-size:10.8px;'>$18.000,0</div>
<div class='c' style='left:883px;top:115px;width:76px;height:20px;line-height:20px;text-align:right;font-size:10.8px;'>$25.000,0</div>
<div class='c' style='left:961px;top:115px;width:76px;height:20px;line-height:20px;text-align:right;font-size:10.8px;'>$25.000,0</div>
<div class='c' style='left:1039px;top:115px;width:76px;height:20px;line-height:20px;text-align:right;font-size:10.8px;'>$25.000,0</div>
<div class='c' style='left:1117px;top:115px;width:76px;height:20px;line-height:20px;text-align:right;font-size:10.8px;'>$19.000,0</div>
<div class='c' style='left:63px;top:135px;width:196px;height:20px;line-height:20px;font-weight:bold;font-size:10.4px;padding-left:11px'>Total Cost of Sales</div>
<div class='c' style='left:259px;top:135px;width:76px;height:20px;line-height:20px;text-align:right;font-size:10.8px;'>$14.500,0</div>
<div class='c' style='left:337px;top:135px;width:76px;height:20px;line-height:20px;text-align:right;font-size:10.8px;'>$16.000,0</div>
<div class='c' style='left:415px;top:135px;width:76px;height:20px;line-height:20px;text-align:right;font-size:10.8px;'>$14.500,0</div>
<div class='c' style='left:493px;top:135px;width:76px;height:20px;line-height:20px;text-align:right;font-size:10.8px;'>$16.000,0</div>
<div class='c' style='left:571px;top:135px;width:76px;height:20px;line-height:20px;text-align:right;font-size:10.8px;'>$14.500,0</div>
<div class='c' style='left:649px;top:135px;width:76px;height:20px;line-height:20px;text-align:right;font-size:10.8px;'>$14.500,0</div>
<div class='c' style='left:727px;top:135px;width:76px;height:20px;line-height:20px;text-align:right;font-size:10.8px;'>$16.000,0</div>
<div class='c' style='left:805px;top:135px;width:76px;height:20px;line-height:20px;text-align:right;font-size:10.8px;'>$11.500,0</div>
<div class='c' style='left:883px;top:135px;width:76px;height:20px;line-height:20px;text-align:right;font-size:10.8px;'>$12.000,0</div>
<div class='c' style='left:961px;top:135px;width:76px;height:20px;line-height:20px;text-align:right;font-size:10.8px;'>$14.500,0</div>
<div class='c' style='left:1039px;top:135px;width:76px;height:20px;line-height:20px;text-align:right;font-size:10.8px;'>$14.500,0</div>
<div class='c' style='left:1117px;top:135px;width:76px;height:20px;line-height:20px;text-align:right;font-size:10.8px;'>$16.000,0</div>
<div class='c' style='left:63px;top:155px;width:196px;height:20px;line-height:20px;font-weight:bold;font-style:italic;font-size:10px;padding-left:11px'>Gross Profit</div>
<div class='c' style='left:259px;top:155px;width:74px;height:20px;line-height:20px;text-align:right;font-size:10.7px;font-weight:bold;font-style:italic'>$10.500,0</div>
<div class='c' style='left:337px;top:155px;width:74px;height:20px;line-height:20px;text-align:right;font-size:10.7px;font-weight:bold;font-style:italic'>$9.000,0</div>
<div class='c' style='left:415px;top:155px;width:74px;height:20px;line-height:20px;text-align:right;font-size:10.7px;font-weight:bold;font-style:italic'>$5.000,0</div>
<div class='c' style='left:493px;top:155px;width:74px;height:20px;line-height:20px;text-align:right;font-size:10.7px;font-weight:bold;font-style:italic'>$3.000,0</div>
<div class='c' style='left:571px;top:155px;width:74px;height:20px;line-height:20px;text-align:right;font-size:10.7px;font-weight:bold;font-style:italic'>$10.500,0</div>
<div class='c' style='left:649px;top:155px;width:74px;height:20px;line-height:20px;text-align:right;font-size:10.7px;font-weight:bold;font-style:italic'>$5.500,0</div>
<div class='c' style='left:727px;top:155px;width:74px;height:20px;line-height:20px;text-align:right;font-size:10.7px;font-weight:bold;font-style:italic'>$3.000,0</div>
<div class='c' style='left:805px;top:155px;width:74px;height:20px;line-height:20px;text-align:right;font-size:10.7px;font-weight:bold;font-style:italic'>$6.500,0</div>
<div class='c' style='left:883px;top:155px;width:74px;height:20px;line-height:20px;text-align:right;font-size:10.7px;font-weight:bold;font-style:italic'>$13.000,0</div>
<div class='c' style='left:961px;top:155px;width:74px;height:20px;line-height:20px;text-align:right;font-size:10.7px;font-weight:bold;font-style:italic'>$10.500,0</div>
<div class='c' style='left:1039px;top:155px;width:74px;height:20px;line-height:20px;text-align:right;font-size:10.7px;font-weight:bold;font-style:italic'>$10.500,0</div>
<div class='c' style='left:1117px;top:155px;width:74px;height:20px;line-height:20px;text-align:right;font-size:10.7px;font-weight:bold;font-style:italic'>$3.000,0</div>
<div class='c' style='left:63px;top:175px;width:196px;height:20px;line-height:20px;font-style:italic;font-size:11px;text-align:right;padding-right:4px'>Interest Income</div>
<div class='c' style='left:259px;top:175px;width:76px;height:20px;line-height:20px;text-align:right;font-size:10.8px;'>$1.500,0</div>
<div class='c' style='left:337px;top:175px;width:76px;height:20px;line-height:20px;text-align:right;font-size:10.8px;'>$1.000,0</div>
<div class='c' style='left:415px;top:175px;width:76px;height:20px;line-height:20px;text-align:right;font-size:10.8px;'>$1.500,0</div>
<div class='c' style='left:493px;top:175px;width:76px;height:20px;line-height:20px;text-align:right;font-size:10.8px;'>$1.500,0</div>
<div class='c' style='left:571px;top:175px;width:76px;height:20px;line-height:20px;text-align:right;font-size:10.8px;'>$2.000,0</div>
<div class='c' style='left:649px;top:175px;width:76px;height:20px;line-height:20px;text-align:right;font-size:10.8px;'>$1.500,0</div>
<div class='c' style='left:727px;top:175px;width:76px;height:20px;line-height:20px;text-align:right;font-size:10.8px;'>$1.500,0</div>
<div class='c' style='left:805px;top:175px;width:76px;height:20px;line-height:20px;text-align:right;font-size:10.8px;'>$1.500,0</div>
<div class='c' style='left:883px;top:175px;width:76px;height:20px;line-height:20px;text-align:right;font-size:10.8px;'>$1.500,0</div>
<div class='c' style='left:961px;top:175px;width:76px;height:20px;line-height:20px;text-align:right;font-size:10.8px;'>$1.500,0</div>
<div class='c' style='left:1039px;top:175px;width:76px;height:20px;line-height:20px;text-align:right;font-size:10.8px;'>$1.500,0</div>
<div class='c' style='left:1117px;top:175px;width:76px;height:20px;line-height:20px;text-align:right;font-size:10.8px;'>$1.500,0</div>
<div class='c' style='left:63px;top:195px;width:196px;height:20px;line-height:20px;font-style:italic;font-size:11px;text-align:right;padding-right:4px'>Rental Income</div>
<div class='c' style='left:259px;top:195px;width:76px;height:20px;line-height:20px;text-align:right;font-size:10.8px;'>$1.000,0</div>
<div class='c' style='left:337px;top:195px;width:76px;height:20px;line-height:20px;text-align:right;font-size:10.8px;'>$2.000,0</div>
<div class='c' style='left:415px;top:195px;width:76px;height:20px;line-height:20px;text-align:right;font-size:10.8px;'>$1.000,0</div>
<div class='c' style='left:493px;top:195px;width:76px;height:20px;line-height:20px;text-align:right;font-size:10.8px;'>$2.000,0</div>
<div class='c' style='left:571px;top:195px;width:76px;height:20px;line-height:20px;text-align:right;font-size:10.8px;'>$1.000,0</div>
<div class='c' style='left:649px;top:195px;width:76px;height:20px;line-height:20px;text-align:right;font-size:10.8px;'>$1.000,0</div>
<div class='c' style='left:727px;top:195px;width:76px;height:20px;line-height:20px;text-align:right;font-size:10.8px;'>$2.000,0</div>
<div class='c' style='left:805px;top:195px;width:76px;height:20px;line-height:20px;text-align:right;font-size:10.8px;'>$1.000,0</div>
<div class='c' style='left:883px;top:195px;width:76px;height:20px;line-height:20px;text-align:right;font-size:10.8px;'>$1.000,0</div>
<div class='c' style='left:961px;top:195px;width:76px;height:20px;line-height:20px;text-align:right;font-size:10.8px;'>$1.000,0</div>
<div class='c' style='left:1039px;top:195px;width:76px;height:20px;line-height:20px;text-align:right;font-size:10.8px;'>$1.000,0</div>
<div class='c' style='left:1117px;top:195px;width:76px;height:20px;line-height:20px;text-align:right;font-size:10.8px;'>$2.000,0</div>
<div class='c' style='left:63px;top:215px;width:196px;height:20px;line-height:20px;font-style:italic;font-size:11px;text-align:right;padding-right:4px'>Other Income</div>
<div class='c' style='left:259px;top:215px;width:76px;height:20px;line-height:20px;text-align:right;font-size:10.8px;'>$500,0</div>
<div class='c' style='left:337px;top:215px;width:76px;height:20px;line-height:20px;text-align:right;font-size:10.8px;'>$750,0</div>
<div class='c' style='left:415px;top:215px;width:76px;height:20px;line-height:20px;text-align:right;font-size:10.8px;'>$500,0</div>
<div class='c' style='left:493px;top:215px;width:76px;height:20px;line-height:20px;text-align:right;font-size:10.8px;'>$750,0</div>
<div class='c' style='left:571px;top:215px;width:76px;height:20px;line-height:20px;text-align:right;font-size:10.8px;'>$500,0</div>
<div class='c' style='left:649px;top:215px;width:76px;height:20px;line-height:20px;text-align:right;font-size:10.8px;'>$500,0</div>
<div class='c' style='left:727px;top:215px;width:76px;height:20px;line-height:20px;text-align:right;font-size:10.8px;'>$750,0</div>
<div class='c' style='left:805px;top:215px;width:76px;height:20px;line-height:20px;text-align:right;font-size:10.8px;'>$500,0</div>
<div class='c' style='left:883px;top:215px;width:76px;height:20px;line-height:20px;text-align:right;font-size:10.8px;'>$500,0</div>
<div class='c' style='left:961px;top:215px;width:76px;height:20px;line-height:20px;text-align:right;font-size:10.8px;'>$500,0</div>
<div class='c' style='left:1039px;top:215px;width:76px;height:20px;line-height:20px;text-align:right;font-size:10.8px;'>$500,0</div>
<div class='c' style='left:1117px;top:215px;width:76px;height:20px;line-height:20px;text-align:right;font-size:10.8px;'>$750,0</div>
<div class='c' style='left:63px;top:235px;width:196px;height:20px;line-height:20px;font-weight:bold;font-size:10.4px;padding-left:11px'>Total Non-Operational Income</div>
<div class='c' style='left:259px;top:235px;width:76px;height:20px;line-height:20px;text-align:right;font-size:10.8px;'>$3.000,0</div>
<div class='c' style='left:337px;top:235px;width:76px;height:20px;line-height:20px;text-align:right;font-size:10.8px;'>$3.750,0</div>
<div class='c' style='left:415px;top:235px;width:76px;height:20px;line-height:20px;text-align:right;font-size:10.8px;'>$3.000,0</div>
<div class='c' style='left:493px;top:235px;width:76px;height:20px;line-height:20px;text-align:right;font-size:10.8px;'>$4.250,0</div>
<div class='c' style='left:571px;top:235px;width:76px;height:20px;line-height:20px;text-align:right;font-size:10.8px;'>$3.500,0</div>
<div class='c' style='left:649px;top:235px;width:76px;height:20px;line-height:20px;text-align:right;font-size:10.8px;'>$3.000,0</div>
<div class='c' style='left:727px;top:235px;width:76px;height:20px;line-height:20px;text-align:right;font-size:10.8px;'>$4.250,0</div>
<div class='c' style='left:805px;top:235px;width:76px;height:20px;line-height:20px;text-align:right;font-size:10.8px;'>$3.000,0</div>
<div class='c' style='left:883px;top:235px;width:76px;height:20px;line-height:20px;text-align:right;font-size:10.8px;'>$3.000,0</div>
<div class='c' style='left:961px;top:235px;width:76px;height:20px;line-height:20px;text-align:right;font-size:10.8px;'>$3.000,0</div>
<div class='c' style='left:1039px;top:235px;width:76px;height:20px;line-height:20px;text-align:right;font-size:10.8px;'>$3.000,0</div>
<div class='c' style='left:1117px;top:235px;width:76px;height:20px;line-height:20px;text-align:right;font-size:10.8px;'>$4.250,0</div>
<div class='c' style='left:63px;top:255px;width:196px;height:20px;line-height:20px;font-weight:bold;font-size:10.4px;padding-left:11px;color:#fff'>TOTAL INCOME <span style='font-size:8.5px'>(GROSS)</span></div>
<div class='c' style='left:259px;top:255px;width:76px;height:20px;line-height:20px;text-align:right;font-size:10.7px;font-weight:bold;color:#fff'>$13.500,0</div>
<div class='c' style='left:337px;top:255px;width:76px;height:20px;line-height:20px;text-align:right;font-size:10.7px;font-weight:bold;color:#fff'>$12.750,0</div>
<div class='c' style='left:415px;top:255px;width:76px;height:20px;line-height:20px;text-align:right;font-size:10.7px;font-weight:bold;color:#fff'>$8.000,0</div>
<div class='c' style='left:493px;top:255px;width:76px;height:20px;line-height:20px;text-align:right;font-size:10.7px;font-weight:bold;color:#fff'>$7.250,0</div>
<div class='c' style='left:571px;top:255px;width:76px;height:20px;line-height:20px;text-align:right;font-size:10.7px;font-weight:bold;color:#fff'>$14.000,0</div>
<div class='c' style='left:649px;top:255px;width:76px;height:20px;line-height:20px;text-align:right;font-size:10.7px;font-weight:bold;color:#fff'>$8.500,0</div>
<div class='c' style='left:727px;top:255px;width:76px;height:20px;line-height:20px;text-align:right;font-size:10.7px;font-weight:bold;color:#fff'>$7.250,0</div>
<div class='c' style='left:805px;top:255px;width:76px;height:20px;line-height:20px;text-align:right;font-size:10.7px;font-weight:bold;color:#fff'>$9.500,0</div>
<div class='c' style='left:883px;top:255px;width:76px;height:20px;line-height:20px;text-align:right;font-size:10.7px;font-weight:bold;color:#fff'>$16.000,0</div>
<div class='c' style='left:961px;top:255px;width:76px;height:20px;line-height:20px;text-align:right;font-size:10.7px;font-weight:bold;color:#fff'>$13.500,0</div>
<div class='c' style='left:1039px;top:255px;width:76px;height:20px;line-height:20px;text-align:right;font-size:10.7px;font-weight:bold;color:#fff'>$13.500,0</div>
<div class='c' style='left:1117px;top:255px;width:76px;height:20px;line-height:20px;text-align:right;font-size:10.7px;font-weight:bold;color:#fff'>$7.250,0</div>
<div class='c' style='left:63px;top:295px;width:196px;height:20px;line-height:20px;text-align:center;color:#548235;font-weight:bold;font-size:11px;transform:scaleX(0.875)'>EXPENSE DETAILS</div>
<div class='a' style='left:63px;top:315px;width:1132px;height:200px;background:#fff'></div>
<div class='a' style='left:259px;top:315px;width:1px;height:200px;background:#d4d4d4'></div>
<div class='a' style='left:337px;top:315px;width:1px;height:200px;background:#d4d4d4'></div>
<div class='a' style='left:415px;top:315px;width:1px;height:200px;background:#d4d4d4'></div>
<div class='a' style='left:493px;top:315px;width:1px;height:200px;background:#d4d4d4'></div>
<div class='a' style='left:571px;top:315px;width:1px;height:200px;background:#d4d4d4'></div>
<div class='a' style='left:649px;top:315px;width:1px;height:200px;background:#d4d4d4'></div>
<div class='a' style='left:727px;top:315px;width:1px;height:200px;background:#d4d4d4'></div>
<div class='a' style='left:805px;top:315px;width:1px;height:200px;background:#d4d4d4'></div>
<div class='a' style='left:883px;top:315px;width:1px;height:200px;background:#d4d4d4'></div>
<div class='a' style='left:961px;top:315px;width:1px;height:200px;background:#d4d4d4'></div>
<div class='a' style='left:1039px;top:315px;width:1px;height:200px;background:#d4d4d4'></div>
<div class='a' style='left:1117px;top:315px;width:1px;height:200px;background:#d4d4d4'></div>
<div class='a' style='left:63px;top:334px;width:1132px;height:1px;background:#d4d4d4'></div>
<div class='a' style='left:63px;top:354px;width:1132px;height:1px;background:#d4d4d4'></div>
<div class='a' style='left:63px;top:374px;width:1132px;height:1px;background:#d4d4d4'></div>
<div class='a' style='left:63px;top:394px;width:1132px;height:1px;background:#d4d4d4'></div>
<div class='a' style='left:63px;top:414px;width:1132px;height:1px;background:#d4d4d4'></div>
<div class='a' style='left:63px;top:434px;width:1132px;height:1px;background:#d4d4d4'></div>
<div class='a' style='left:63px;top:454px;width:1132px;height:1px;background:#d4d4d4'></div>
<div class='a' style='left:63px;top:474px;width:1132px;height:1px;background:#d4d4d4'></div>
<div class='a' style='left:63px;top:314px;width:1133px;height:1px;background:#70ad47'></div>
<div class='a' style='left:63px;top:314px;width:1px;height:200px;background:#70ad47'></div>
<div class='a' style='left:1195px;top:314px;width:1px;height:200px;background:#70ad47'></div>
<div class='c' style='left:63px;top:315px;width:196px;height:20px;line-height:20px;font-style:italic;font-size:10.9px;text-align:right;padding-right:4px'>Wages and Salaries</div>
<div class='c' style='left:259px;top:315px;width:74px;height:20px;line-height:20px;text-align:right;font-style:italic;font-size:10.8px'>$2.000,0</div>
<div class='c' style='left:337px;top:315px;width:74px;height:20px;line-height:20px;text-align:right;font-style:italic;font-size:10.8px'>$2.000,0</div>
<div class='c' style='left:415px;top:315px;width:74px;height:20px;line-height:20px;text-align:right;font-style:italic;font-size:10.8px'>$2.500,0</div>
<div class='c' style='left:493px;top:315px;width:74px;height:20px;line-height:20px;text-align:right;font-style:italic;font-size:10.8px'>$3.000,0</div>
<div class='c' style='left:571px;top:315px;width:74px;height:20px;line-height:20px;text-align:right;font-style:italic;font-size:10.8px'>$2.750,0</div>
<div class='c' style='left:649px;top:315px;width:74px;height:20px;line-height:20px;text-align:right;font-style:italic;font-size:10.8px'>$3.500,0</div>
<div class='c' style='left:727px;top:315px;width:74px;height:20px;line-height:20px;text-align:right;font-style:italic;font-size:10.8px'>$3.500,0</div>
<div class='c' style='left:805px;top:315px;width:74px;height:20px;line-height:20px;text-align:right;font-style:italic;font-size:10.8px'>$4.000,0</div>
<div class='c' style='left:883px;top:315px;width:74px;height:20px;line-height:20px;text-align:right;font-style:italic;font-size:10.8px'>$2.500,0</div>
<div class='c' style='left:961px;top:315px;width:74px;height:20px;line-height:20px;text-align:right;font-style:italic;font-size:10.8px'>$2.750,0</div>
<div class='c' style='left:1039px;top:315px;width:74px;height:20px;line-height:20px;text-align:right;font-style:italic;font-size:10.8px'>$3.250,0</div>
<div class='c' style='left:1117px;top:315px;width:74px;height:20px;line-height:20px;text-align:right;font-style:italic;font-size:10.8px'>$3.200,0</div>
<div class='c' style='left:63px;top:335px;width:196px;height:20px;line-height:20px;font-style:italic;font-size:10.9px;text-align:right;padding-right:4px'>Direct Marketing</div>
<div class='c' style='left:259px;top:335px;width:74px;height:20px;line-height:20px;text-align:right;font-style:italic;font-size:10.8px'>$1.100,0</div>
<div class='c' style='left:337px;top:335px;width:74px;height:20px;line-height:20px;text-align:right;font-style:italic;font-size:10.8px'>$950,0</div>
<div class='c' style='left:415px;top:335px;width:74px;height:20px;line-height:20px;text-align:right;font-style:italic;font-size:10.8px'>$800,0</div>
<div class='c' style='left:493px;top:335px;width:74px;height:20px;line-height:20px;text-align:right;font-style:italic;font-size:10.8px'>$750,0</div>
<div class='c' style='left:571px;top:335px;width:74px;height:20px;line-height:20px;text-align:right;font-style:italic;font-size:10.8px'>$700,0</div>
<div class='c' style='left:649px;top:335px;width:74px;height:20px;line-height:20px;text-align:right;font-style:italic;font-size:10.8px'>$750,0</div>
<div class='c' style='left:727px;top:335px;width:74px;height:20px;line-height:20px;text-align:right;font-style:italic;font-size:10.8px'>$750,0</div>
<div class='c' style='left:805px;top:335px;width:74px;height:20px;line-height:20px;text-align:right;font-style:italic;font-size:10.8px'>$700,0</div>
<div class='c' style='left:883px;top:335px;width:74px;height:20px;line-height:20px;text-align:right;font-style:italic;font-size:10.8px'>$800,0</div>
<div class='c' style='left:961px;top:335px;width:74px;height:20px;line-height:20px;text-align:right;font-style:italic;font-size:10.8px'>$900,0</div>
<div class='c' style='left:1039px;top:335px;width:74px;height:20px;line-height:20px;text-align:right;font-style:italic;font-size:10.8px'>$1.000,0</div>
<div class='c' style='left:1117px;top:335px;width:74px;height:20px;line-height:20px;text-align:right;font-style:italic;font-size:10.8px'>$1.000,0</div>
<div class='c' style='left:63px;top:355px;width:196px;height:20px;line-height:20px;font-style:italic;font-size:10.9px;text-align:right;padding-right:4px'>Advertising</div>
<div class='c' style='left:259px;top:355px;width:74px;height:20px;line-height:20px;text-align:right;font-style:italic;font-size:10.8px'>$750,0</div>
<div class='c' style='left:337px;top:355px;width:74px;height:20px;line-height:20px;text-align:right;font-style:italic;font-size:10.8px'>$500,0</div>
<div class='c' style='left:415px;top:355px;width:74px;height:20px;line-height:20px;text-align:right;font-style:italic;font-size:10.8px'>$400,0</div>
<div class='c' style='left:493px;top:355px;width:74px;height:20px;line-height:20px;text-align:right;font-style:italic;font-size:10.8px'>$450,0</div>
<div class='c' style='left:571px;top:355px;width:74px;height:20px;line-height:20px;text-align:right;font-style:italic;font-size:10.8px'>$400,0</div>
<div class='c' style='left:649px;top:355px;width:74px;height:20px;line-height:20px;text-align:right;font-style:italic;font-size:10.8px'>$450,0</div>
<div class='c' style='left:727px;top:355px;width:74px;height:20px;line-height:20px;text-align:right;font-style:italic;font-size:10.8px'>$700,0</div>
<div class='c' style='left:805px;top:355px;width:74px;height:20px;line-height:20px;text-align:right;font-style:italic;font-size:10.8px'>$500,0</div>
<div class='c' style='left:883px;top:355px;width:74px;height:20px;line-height:20px;text-align:right;font-style:italic;font-size:10.8px'>$500,0</div>
<div class='c' style='left:961px;top:355px;width:74px;height:20px;line-height:20px;text-align:right;font-style:italic;font-size:10.8px'>$400,0</div>
<div class='c' style='left:1039px;top:355px;width:74px;height:20px;line-height:20px;text-align:right;font-style:italic;font-size:10.8px'>$400,0</div>
<div class='c' style='left:1117px;top:355px;width:74px;height:20px;line-height:20px;text-align:right;font-style:italic;font-size:10.8px'>$350,0</div>
<div class='c' style='left:63px;top:375px;width:196px;height:20px;line-height:20px;font-style:italic;font-size:10.9px;text-align:right;padding-right:4px'>Office Supplies</div>
<div class='c' style='left:259px;top:375px;width:74px;height:20px;line-height:20px;text-align:right;font-style:italic;font-size:10.8px'>$250,0</div>
<div class='c' style='left:337px;top:375px;width:74px;height:20px;line-height:20px;text-align:right;font-style:italic;font-size:10.8px'>$200,0</div>
<div class='c' style='left:415px;top:375px;width:74px;height:20px;line-height:20px;text-align:right;font-style:italic;font-size:10.8px'>$300,0</div>
<div class='c' style='left:493px;top:375px;width:74px;height:20px;line-height:20px;text-align:right;font-style:italic;font-size:10.8px'>$350,0</div>
<div class='c' style='left:571px;top:375px;width:74px;height:20px;line-height:20px;text-align:right;font-style:italic;font-size:10.8px'>$250,0</div>
<div class='c' style='left:649px;top:375px;width:74px;height:20px;line-height:20px;text-align:right;font-style:italic;font-size:10.8px'>$250,0</div>
<div class='c' style='left:727px;top:375px;width:74px;height:20px;line-height:20px;text-align:right;font-style:italic;font-size:10.8px'>$200,0</div>
<div class='c' style='left:805px;top:375px;width:74px;height:20px;line-height:20px;text-align:right;font-style:italic;font-size:10.8px'>$300,0</div>
<div class='c' style='left:883px;top:375px;width:74px;height:20px;line-height:20px;text-align:right;font-style:italic;font-size:10.8px'>$350,0</div>
<div class='c' style='left:961px;top:375px;width:74px;height:20px;line-height:20px;text-align:right;font-style:italic;font-size:10.8px'>$300,0</div>
<div class='c' style='left:1039px;top:375px;width:74px;height:20px;line-height:20px;text-align:right;font-style:italic;font-size:10.8px'>$250,0</div>
<div class='c' style='left:1117px;top:375px;width:74px;height:20px;line-height:20px;text-align:right;font-style:italic;font-size:10.8px'>$250,0</div>
<div class='c' style='left:63px;top:395px;width:196px;height:20px;line-height:20px;font-style:italic;font-size:10.9px;text-align:right;padding-right:4px'>Outside Services</div>
<div class='c' style='left:259px;top:395px;width:74px;height:20px;line-height:20px;text-align:right;font-style:italic;font-size:10.8px'>$400,0</div>
<div class='c' style='left:337px;top:395px;width:74px;height:20px;line-height:20px;text-align:right;font-style:italic;font-size:10.8px'>$250,0</div>
<div class='c' style='left:415px;top:395px;width:74px;height:20px;line-height:20px;text-align:right;font-style:italic;font-size:10.8px'>$300,0</div>
<div class='c' style='left:493px;top:395px;width:74px;height:20px;line-height:20px;text-align:right;font-style:italic;font-size:10.8px'>$300,0</div>
<div class='c' style='left:571px;top:395px;width:74px;height:20px;line-height:20px;text-align:right;font-style:italic;font-size:10.8px'>$250,0</div>
<div class='c' style='left:649px;top:395px;width:74px;height:20px;line-height:20px;text-align:right;font-style:italic;font-size:10.8px'>$250,0</div>
<div class='c' style='left:727px;top:395px;width:74px;height:20px;line-height:20px;text-align:right;font-style:italic;font-size:10.8px'>$300,0</div>
<div class='c' style='left:805px;top:395px;width:74px;height:20px;line-height:20px;text-align:right;font-style:italic;font-size:10.8px'>$300,0</div>
<div class='c' style='left:883px;top:395px;width:74px;height:20px;line-height:20px;text-align:right;font-style:italic;font-size:10.8px'>$350,0</div>
<div class='c' style='left:961px;top:395px;width:74px;height:20px;line-height:20px;text-align:right;font-style:italic;font-size:10.8px'>$400,0</div>
<div class='c' style='left:1039px;top:395px;width:74px;height:20px;line-height:20px;text-align:right;font-style:italic;font-size:10.8px'>$450,0</div>
<div class='c' style='left:1117px;top:395px;width:74px;height:20px;line-height:20px;text-align:right;font-style:italic;font-size:10.8px'>$350,0</div>
<div class='c' style='left:63px;top:415px;width:196px;height:20px;line-height:20px;font-style:italic;font-size:10.9px;text-align:right;padding-right:4px'>Rent</div>
<div class='c' style='left:259px;top:415px;width:74px;height:20px;line-height:20px;text-align:right;font-style:italic;font-size:10.8px'>$500,0</div>
<div class='c' style='left:337px;top:415px;width:74px;height:20px;line-height:20px;text-align:right;font-style:italic;font-size:10.8px'>$450,0</div>
<div class='c' style='left:415px;top:415px;width:74px;height:20px;line-height:20px;text-align:right;font-style:italic;font-size:10.8px'>$650,0</div>
<div class='c' style='left:493px;top:415px;width:74px;height:20px;line-height:20px;text-align:right;font-style:italic;font-size:10.8px'>$600,0</div>
<div class='c' style='left:571px;top:415px;width:74px;height:20px;line-height:20px;text-align:right;font-style:italic;font-size:10.8px'>$550,0</div>
<div class='c' style='left:649px;top:415px;width:74px;height:20px;line-height:20px;text-align:right;font-style:italic;font-size:10.8px'>$500,0</div>
<div class='c' style='left:727px;top:415px;width:74px;height:20px;line-height:20px;text-align:right;font-style:italic;font-size:10.8px'>$450,0</div>
<div class='c' style='left:805px;top:415px;width:74px;height:20px;line-height:20px;text-align:right;font-style:italic;font-size:10.8px'>$400,0</div>
<div class='c' style='left:883px;top:415px;width:74px;height:20px;line-height:20px;text-align:right;font-style:italic;font-size:10.8px'>$350,0</div>
<div class='c' style='left:961px;top:415px;width:74px;height:20px;line-height:20px;text-align:right;font-style:italic;font-size:10.8px'>$350,0</div>
<div class='c' style='left:1039px;top:415px;width:74px;height:20px;line-height:20px;text-align:right;font-style:italic;font-size:10.8px'>$300,0</div>
<div class='c' style='left:1117px;top:415px;width:74px;height:20px;line-height:20px;text-align:right;font-style:italic;font-size:10.8px'>$500,0</div>
<div class='c' style='left:63px;top:435px;width:196px;height:20px;line-height:20px;font-style:italic;font-size:10.9px;text-align:right;padding-right:4px'>Telephone</div>
<div class='c' style='left:259px;top:435px;width:74px;height:20px;line-height:20px;text-align:right;font-style:italic;font-size:10.8px'>$100,0</div>
<div class='c' style='left:337px;top:435px;width:74px;height:20px;line-height:20px;text-align:right;font-style:italic;font-size:10.8px'>$100,0</div>
<div class='c' style='left:415px;top:435px;width:74px;height:20px;line-height:20px;text-align:right;font-style:italic;font-size:10.8px'>$150,0</div>
<div class='c' style='left:493px;top:435px;width:74px;height:20px;line-height:20px;text-align:right;font-style:italic;font-size:10.8px'>$150,0</div>
<div class='c' style='left:571px;top:435px;width:74px;height:20px;line-height:20px;text-align:right;font-style:italic;font-size:10.8px'>$150,0</div>
<div class='c' style='left:649px;top:435px;width:74px;height:20px;line-height:20px;text-align:right;font-style:italic;font-size:10.8px'>$150,0</div>
<div class='c' style='left:727px;top:435px;width:74px;height:20px;line-height:20px;text-align:right;font-style:italic;font-size:10.8px'>$200,0</div>
<div class='c' style='left:805px;top:435px;width:74px;height:20px;line-height:20px;text-align:right;font-style:italic;font-size:10.8px'>$200,0</div>
<div class='c' style='left:883px;top:435px;width:74px;height:20px;line-height:20px;text-align:right;font-style:italic;font-size:10.8px'>$200,0</div>
<div class='c' style='left:961px;top:435px;width:74px;height:20px;line-height:20px;text-align:right;font-style:italic;font-size:10.8px'>$250,0</div>
<div class='c' style='left:1039px;top:435px;width:74px;height:20px;line-height:20px;text-align:right;font-style:italic;font-size:10.8px'>$250,0</div>
<div class='c' style='left:1117px;top:435px;width:74px;height:20px;line-height:20px;text-align:right;font-style:italic;font-size:10.8px'>$250,0</div>
<div class='c' style='left:63px;top:455px;width:196px;height:20px;line-height:20px;font-style:italic;font-size:10.9px;text-align:right;padding-right:4px'>Utilities</div>
<div class='c' style='left:259px;top:455px;width:74px;height:20px;line-height:20px;text-align:right;font-style:italic;font-size:10.8px'>$200,0</div>
<div class='c' style='left:337px;top:455px;width:74px;height:20px;line-height:20px;text-align:right;font-style:italic;font-size:10.8px'>$200,0</div>
<div class='c' style='left:415px;top:455px;width:74px;height:20px;line-height:20px;text-align:right;font-style:italic;font-size:10.8px'>$200,0</div>
<div class='c' style='left:493px;top:455px;width:74px;height:20px;line-height:20px;text-align:right;font-style:italic;font-size:10.8px'>$200,0</div>
<div class='c' style='left:571px;top:455px;width:74px;height:20px;line-height:20px;text-align:right;font-style:italic;font-size:10.8px'>$200,0</div>
<div class='c' style='left:649px;top:455px;width:74px;height:20px;line-height:20px;text-align:right;font-style:italic;font-size:10.8px'>$200,0</div>
<div class='c' style='left:727px;top:455px;width:74px;height:20px;line-height:20px;text-align:right;font-style:italic;font-size:10.8px'>$200,0</div>
<div class='c' style='left:805px;top:455px;width:74px;height:20px;line-height:20px;text-align:right;font-style:italic;font-size:10.8px'>$200,0</div>
<div class='c' style='left:883px;top:455px;width:74px;height:20px;line-height:20px;text-align:right;font-style:italic;font-size:10.8px'>$200,0</div>
<div class='c' style='left:961px;top:455px;width:74px;height:20px;line-height:20px;text-align:right;font-style:italic;font-size:10.8px'>$250,0</div>
<div class='c' style='left:1039px;top:455px;width:74px;height:20px;line-height:20px;text-align:right;font-style:italic;font-size:10.8px'>$250,0</div>
<div class='c' style='left:1117px;top:455px;width:74px;height:20px;line-height:20px;text-align:right;font-style:italic;font-size:10.8px'>$250,0</div>
<svg class='a' style='left:60px;top:11px' width='56' height='48' viewBox='0 0 56 48'><path d='M5 4 V42.5 H49.5' fill='none' stroke='#14a0f5' stroke-width='4' stroke-linecap='round' stroke-linejoin='round'/>
<path d='M12.1 31 V42 M22.9 24.5 V42 M32.7 27.7 V42 M42.5 21.8 V42' stroke='#14a0f5' stroke-width='3.6'/>
<path d='M10.4 28.3 L22.9 18.8 L32.7 24.5 L42.5 16.8' fill='none' stroke='#1dbf3a' stroke-width='3.4' stroke-linejoin='round'/>
<path d='M38.2 13.6 L47.9 12 L46.4 21.8Z' fill='#1dbf3a' stroke='#1dbf3a' stroke-width='1.2' stroke-linejoin='round'/></svg>
<div class='t' style='left:128.6px;top:19.55px;font-size:11.4px;line-height:11.4px;color:#ffffff;'>PROFIT &amp; LOSS STATEMENT</div>
<div class='t' style='left:128.6px;top:39.06px;font-size:14.7px;line-height:14.7px;color:#ffffff;font-weight:bold'>DATABASE</div>
<div class='a' style='left:633px;top:15px;width:78px;height:40px;border-radius:6px;background:linear-gradient(180deg,#ffffff 0%,#e4e4e4 22%,#cfcfcf 60%,#d6d6d6 100%);box-shadow:0 1px 2px rgba(0,0,0,0.5), inset 0 -2px 3px rgba(0,0,0,0.15)'></div>
<svg class='a' style='left:635px;top:19px' width='34' height='32' viewBox='0 0 34 32'><defs><linearGradient id='ag' x1='0' y1='0' x2='0' y2='1'><stop offset='0' stop-color='#b4b4b4'/><stop offset='0.45' stop-color='#6a6a6a'/><stop offset='1' stop-color='#2a2a2a'/></linearGradient></defs>
<path d='M1.3 10.7 L14.9 1.1 V7.7 H20.2 A11.4 11.4 0 0 1 20.2 30.5 H8.3 V24.8 H20.2 A5.7 5.7 0 0 0 20.2 13.4 H14.9 V20.4 Z' fill='url(#ag)'/></svg>
<div class='t' style='left:670px;top:24.37px;font-size:9.6px;line-height:9.6px;color:#111;font-weight:bold;font-style:italic'>Back to</div>
<div class='t' style='left:673.6px;top:38.47px;font-size:9.6px;line-height:9.6px;color:#111;font-weight:bold;font-style:italic'>Menu</div>
<div class='t' style='right:307.5999999999999px;top:24.18px;font-size:10.3px;line-height:10.3px;color:#ffffff;'>For other Excel templates, <b>click</b><span style='display:inline-block;width:12px'></span></div>
<div class='t' style='right:309.5999999999999px;top:37.52px;font-size:10.25px;line-height:10.25px;color:#ffffff;'><i>For customization needs, email to: info@someka.net</i></div>
<svg class='a' style='left:1027px;top:24px' width='11' height='10' viewBox='0 0 11 10'><path d='M0.5 5 H9.5 M5.5 1 L9.5 5 L5.5 9' fill='none' stroke='#fff' stroke-width='1.4'/></svg>
<div class='a' style='left:1066px;top:14px;width:127px;height:42px;background:#fff;border:1px solid #000;box-shadow:2px 2px 2px rgba(0,0,0,0.35)'></div>
<div class='t' style='left:1069px;top:17.71px;font-size:25.5px;line-height:25.5px;color:#111;font-weight:bold;letter-spacing:0.5px;transform:scaleX(1.2);transform-origin:0 0'>someka</div>
<svg class='a' style='left:1085.5px;top:21px' width='20' height='20' viewBox='0 0 20 20'><circle cx='10' cy='10' r='9.3' fill='#111'/><rect x='6.5' y='6.5' width='7' height='7' rx='2' fill='#fff'/><path d='M8.3 12 V10.8 M10 12 V9.6 M11.7 12 V8.4' stroke='#111' stroke-width='1'/></svg>
<div class='t' style='left:1107.3px;top:44.21px;font-size:9.2px;line-height:9.2px;color:#555;font-weight:bold;letter-spacing:0.8px'>Excel Solutions</div>
</div>
</body></html>
